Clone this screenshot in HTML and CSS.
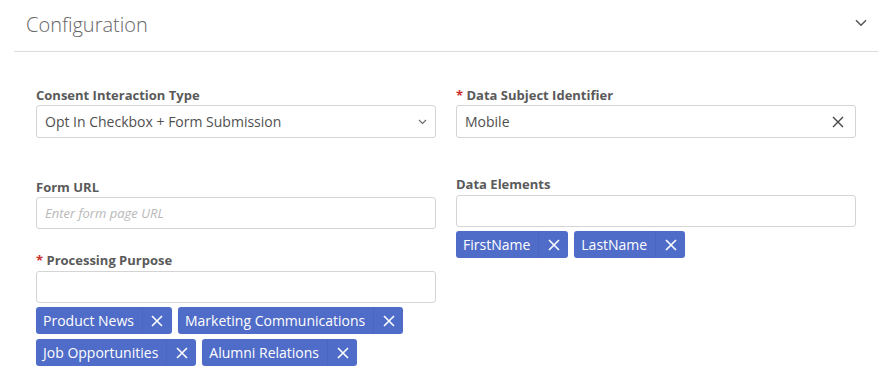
FILE: index.html
```html
<!DOCTYPE html>
<html lang="en">
<head>
<meta charset="UTF-8" />
<meta name="viewport" content="width=device-width, initial-scale=1" />
<title>Configuration</title>
<link rel="stylesheet" href="styles.css">
</head>
<body>
  <section class="panel">
    <div class="panel-header">
      <h2 class="panel-title">Configuration</h2>
      <svg class="collapse-icon" width="12" height="8" viewBox="0 0 12 8" aria-hidden="true">
        <path d="M1 1.2 L6 6.2 L11 1.2" fill="none" stroke="#555" stroke-width="1.5"/>
      </svg>
    </div>

    <div class="panel-body">
      <!-- left column -->
      <div class="column">
        <div class="field">
          <label class="field-label">Consent Interaction Type</label>
          <div class="input-box">
            <span class="value">Opt In Checkbox + Form Submission</span>
            <svg class="select-caret" width="9" height="6" viewBox="0 0 9 6" aria-hidden="true">
              <path d="M1 1 L4.5 4.5 L8 1" fill="none" stroke="#666" stroke-width="1.1"/>
            </svg>
          </div>
        </div>

        <div class="field field-url">
          <label class="field-label">Form URL</label>
          <div class="input-box short">
            <span class="placeholder">Enter form page URL</span>
          </div>
        </div>

        <div class="field field-purpose">
          <label class="field-label"><span class="req">*</span> Processing Purpose</label>
          <div class="input-box short"></div>
          <div class="pills">
            <span class="pill"><span class="pill-text">Product News</span><span class="pill-remove"><svg width="12" height="12" viewBox="0 0 12 12"><path d="M1 1 L11 11 M11 1 L1 11"/></svg></span></span>
            <span class="pill"><span class="pill-text">Marketing Communications</span><span class="pill-remove"><svg width="12" height="12" viewBox="0 0 12 12"><path d="M1 1 L11 11 M11 1 L1 11"/></svg></span></span>
            <span class="pill"><span class="pill-text">Job Opportunities</span><span class="pill-remove"><svg width="12" height="12" viewBox="0 0 12 12"><path d="M1 1 L11 11 M11 1 L1 11"/></svg></span></span>
            <span class="pill"><span class="pill-text">Alumni Relations</span><span class="pill-remove"><svg width="12" height="12" viewBox="0 0 12 12"><path d="M1 1 L11 11 M11 1 L1 11"/></svg></span></span>
          </div>
        </div>
      </div>

      <!-- right column -->
      <div class="column">
        <div class="field">
          <label class="field-label"><span class="req">*</span> Data Subject Identifier</label>
          <div class="input-box">
            <span class="value">Mobile</span>
            <svg class="clear-icon" width="12" height="12" viewBox="0 0 12 12" aria-hidden="true">
              <path d="M1 1 L11 11 M11 1 L1 11" fill="none" stroke="#444" stroke-width="1.4"/>
            </svg>
          </div>
        </div>

        <div class="field field-elements">
          <label class="field-label">Data Elements</label>
          <div class="input-box short"></div>
          <div class="pills">
            <span class="pill"><span class="pill-text">FirstName</span><span class="pill-remove"><svg width="12" height="12" viewBox="0 0 12 12"><path d="M1 1 L11 11 M11 1 L1 11"/></svg></span></span>
            <span class="pill"><span class="pill-text">LastName</span><span class="pill-remove"><svg width="12" height="12" viewBox="0 0 12 12"><path d="M1 1 L11 11 M11 1 L1 11"/></svg></span></span>
          </div>
        </div>
      </div>
    </div>
  </section>
</body>
</html>
```

FILE: styles.css
```css
:root {
  --color-text: #555555;
  --color-label: #5a5a5a;
  --color-border: #d4d4d4;
  --color-pill: #4f6cc8;
  --color-pill-line: #4a66bf;
  --color-required: #c9302c;
  --font-family: 'Open Sans', 'Liberation Sans', Arial, sans-serif;
}

* {
  box-sizing: border-box;
}

body {
  margin: 0;
  background: #fff;
  font-family: var(--font-family);
  color: var(--color-text);
}

.panel {
  margin: 0 8px 0 14px;
}

.panel-header {
  display: flex;
  align-items: center;
  justify-content: space-between;
  padding: 11px 11px 12px 12px;
  border-bottom: 1px solid #dcdcdc;
}

.panel-title {
  margin: 0;
  font-size: 20px;
  line-height: 28px;
  font-weight: 300;
  color: #666;
}

.collapse-icon {
  margin-top: -5px;
}

.panel-body {
  display: flex;
  gap: 20px;
  padding: 34px 22px 0 22px;
}

.column {
  width: 400px;
  display: flex;
  flex-direction: column;
}

.field-label {
  display: block;
  font-size: 13px;
  line-height: 18px;
  font-weight: 700;
  color: var(--color-label);
  margin-bottom: 1px;
}

.req {
  color: var(--color-required);
}

.input-box {
  height: 33px;
  border: 1px solid var(--color-border);
  border-radius: 3px;
  display: flex;
  align-items: center;
  justify-content: space-between;
  padding: 0 11px 0 8px;
  font-size: 14px;
}

.input-box.short {
  height: 32px;
}

.value {
  color: #505050;
}

.placeholder {
  color: #b8b8b8;
  font-style: italic;
  font-size: 13px;
}

.select-caret {
  margin-right: -3px;
}

.field-url {
  margin-top: 40px;
}

.field-purpose {
  margin-top: 22px;
}

.field-purpose .field-label,
.field-elements .field-label {
  margin-bottom: 2px;
}

.field-elements {
  margin-top: 37px;
}

.pills {
  display: flex;
  flex-wrap: wrap;
  gap: 5px 6px;
  margin-top: 4px;
}

.pill {
  display: inline-flex;
  align-items: stretch;
  height: 27px;
  background: var(--color-pill);
  color: #fff;
  border-radius: 3px;
  font-size: 14px;
  line-height: 27px;
}

.pill-text {
  padding: 0 8px 0 7px;
}

.pill-remove {
  width: 30px;
  display: flex;
  align-items: center;
  justify-content: center;
  border-left: 1px solid var(--color-pill-line);
}

.pill-remove svg {
  fill: none;
  stroke: #fff;
  stroke-width: 1.6;
}
```
